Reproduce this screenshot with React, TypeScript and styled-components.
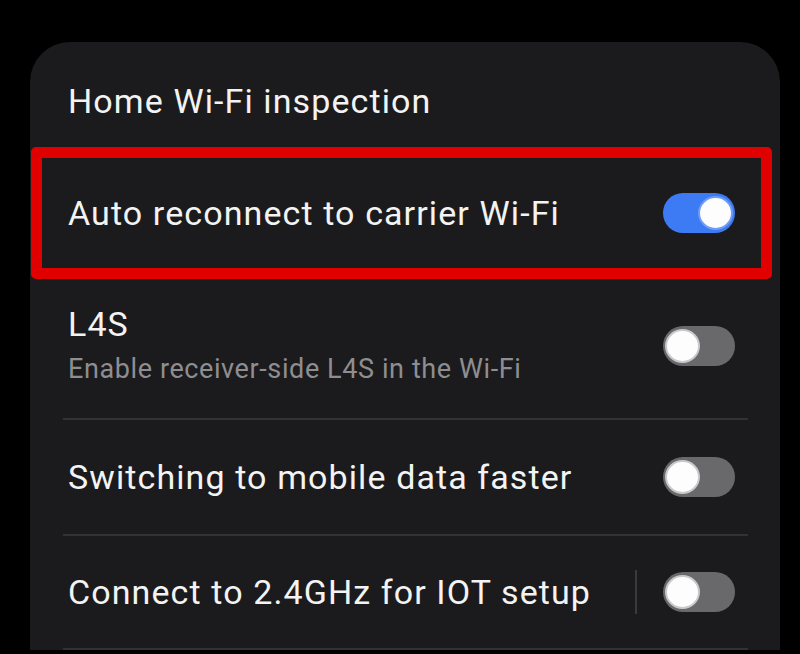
import React from 'react';
import styled, { createGlobalStyle } from 'styled-components';

const GlobalStyle = createGlobalStyle`
  html, body {
    margin: 0;
    padding: 0;
    background: #000;
  }
  body {
    font-family: Roboto, 'Noto Sans', 'Liberation Sans', sans-serif;
    -webkit-font-smoothing: antialiased;
  }
`;

const Page = styled.div`
  width: 800px;
  height: 654px;
  background: #000;
  overflow: hidden;
`;

const Card = styled.section`
  margin: 42px 0 0 30px;
  width: 750px;
  height: 608px;
  background: #1b1b1d;
  border-radius: 40px 40px 0 0;
  display: flex;
  flex-direction: column;
`;

const Row = styled.div<{ $h: number; $top?: number; $bottom?: number }>`
  position: relative;
  height: ${({ $h }) => $h}px;
  padding: ${({ $top }) => $top || 0}px 45px ${({ $bottom }) => $bottom || 0}px 38px;
  box-sizing: border-box;
  display: flex;
  align-items: center;
  justify-content: space-between;
`;

// red annotation box drawn over the highlighted row
const Highlight = styled.span`
  position: absolute;
  inset: 0 8px 0 1px;
  border: 11px solid #e10000;
  border-radius: 5px;
  pointer-events: none;
`;

const TextBlock = styled.div`
  display: flex;
  flex-direction: column;
`;

const Title = styled.div`
  color: #f3f3f3;
  font-size: 34px;
  line-height: 40px;
  letter-spacing: 1.1px;
`;

const Subtitle = styled.div`
  margin-top: 9px;
  color: #8e8e91;
  font-size: 27px;
  line-height: 32px;
  letter-spacing: 0.6px;
`;

const Divider = styled.div`
  height: 2px;
  margin: 0 32px 0 33px;
  background: #323235;
  flex-shrink: 0;
`;

const Controls = styled.div`
  display: flex;
  align-items: center;
`;

const Separator = styled.span`
  width: 2px;
  height: 44px;
  margin-right: 26px;
  background: #3a3a3c;
`;

const Track = styled.span<{ $on: boolean }>`
  position: relative;
  display: inline-block;
  width: 72px;
  height: 40px;
  border-radius: 20px;
  background: ${({ $on }) => ($on ? '#3d7bf4' : '#69696c')};
`;

const Thumb = styled.span<{ $on: boolean }>`
  position: absolute;
  top: 3px;
  left: ${({ $on }) => ($on ? '35px' : '2px')};
  width: 35px;
  height: 34px;
  box-sizing: border-box;
  border-radius: 50%;
  background: #fdfdfd;
  border: 2px solid ${({ $on }) => ($on ? '#6f9cf7' : '#c9c9cb')};
`;

const SwitchAlign = styled.div<{ $shift?: number }>`
  display: flex;
  margin-top: ${({ $shift }) => $shift || 0}px;
`;

function Switch({ on }: { on: boolean }) {
  return (
    <Track $on={on}>
      <Thumb $on={on} />
    </Track>
  );
}

export default function App() {
  return (
    <Page>
      <GlobalStyle />
      <Card>
        <Row $h={105} $top={12}>
          <Title>Home Wi-Fi inspection</Title>
        </Row>

        <Row $h={132}>
          <Highlight />
          <Title>Auto reconnect to carrier Wi-Fi</Title>
          <Switch on />
        </Row>

        <Row $h={139} $bottom={8}>
          <TextBlock>
            <Title>L4S</Title>
            <Subtitle>Enable receiver-side L4S in the Wi-Fi</Subtitle>
          </TextBlock>
          <SwitchAlign $shift={2}>
            <Switch on={false} />
          </SwitchAlign>
        </Row>
        <Divider />

        <Row $h={114}>
          <Title>Switching to mobile data faster</Title>
          <Switch on={false} />
        </Row>
        <Divider />

        <Row $h={112}>
          <Title>Connect to 2.4GHz for IOT setup</Title>
          <Controls>
            <Separator />
            <Switch on={false} />
          </Controls>
        </Row>
        <Divider />
      </Card>
    </Page>
  );
}
